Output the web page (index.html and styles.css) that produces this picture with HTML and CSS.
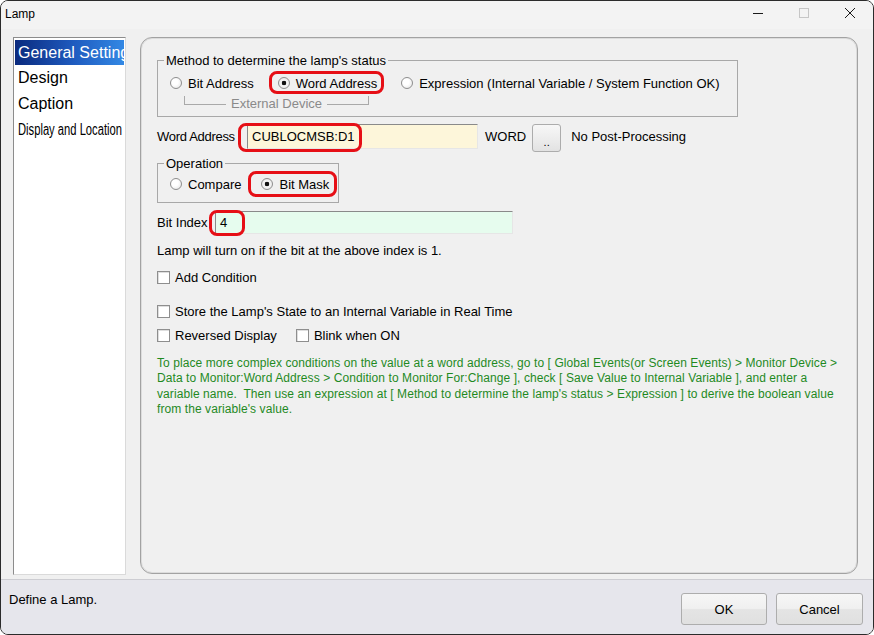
FILE: index.html
```html
<!DOCTYPE html>
<html lang="en">
<head>
    <meta charset="UTF-8">
    <title>Lamp</title>
    <link rel="stylesheet" href="styles.css">
</head>
<body>
    <div class="window">
        <div class="titlebar">
            <span class="title">Lamp</span>
            <div class="controls">
                <span class="ctrl"><svg width="10" height="10" viewBox="0 0 10 10"><path d="M0 5.5h10" stroke="#1a1a1a" stroke-width="1"/></svg></span>
                <span class="ctrl"><svg width="10" height="10" viewBox="0 0 10 10"><rect x="0.5" y="0.5" width="9" height="9" fill="none" stroke="#c6c6c6"/></svg></span>
                <span class="ctrl"><svg width="10" height="10" viewBox="0 0 10 10"><path d="M0 0L10 10M10 0L0 10" stroke="#1a1a1a" stroke-width="1"/></svg></span>
            </div>
        </div>

        <div class="main">
            <ul class="nav">
                <li class="active">General Setting</li>
                <li>Design</li>
                <li>Caption</li>
                <li class="small"><span>Display and Location</span></li>
            </ul>

            <div class="panel">
                <fieldset class="group method">
                    <legend>Method to determine the lamp's status</legend>
                    <div class="opts">
                        <label class="opt"><span class="radio"></span>Bit Address</label>
                        <label class="opt mark mark-word"><span class="radio on"></span>Word Address</label>
                        <label class="opt"><span class="radio"></span>Expression (Internal Variable / System Function OK)</label>
                    </div>
                    <div class="bracket"><span>External Device</span></div>
                </fieldset>

                <div class="row">
                    <span class="lbl lbl-word">Word Address</span>
                    <span class="field field-word">CUBLOCMSB:D1<i class="ring ring-word"></i></span>
                    <span class="lbl unit">WORD</span>
                    <button class="dots">..</button>
                    <span class="lbl post">No Post-Processing</span>
                </div>

                <fieldset class="group op">
                    <legend>Operation</legend>
                    <div class="opts">
                        <label class="opt"><span class="radio"></span>Compare</label>
                        <label class="opt mark mark-mask"><span class="radio on"></span>Bit Mask</label>
                    </div>
                </fieldset>

                <div class="row row-index">
                    <span class="lbl lbl-index">Bit Index</span>
                    <span class="field field-index">4<i class="ring ring-index"></i></span>
                </div>

                <p class="hint">Lamp will turn on if the bit at the above index is 1.</p>

                <label class="check c-add"><span class="box"></span>Add Condition</label>
                <label class="check c-store"><span class="box"></span>Store the Lamp's State to an Internal Variable in Real Time</label>
                <div class="c-pair">
                    <label class="check"><span class="box"></span>Reversed Display</label>
                    <label class="check"><span class="box"></span>Blink when ON</label>
                </div>

                <p class="note">To place more complex conditions on the value at a word address, go to [ Global Events(or Screen Events) &gt; Monitor Device &gt;<br>Data to Monitor:Word Address &gt; Condition to Monitor For:Change ], check [ Save Value to Internal Variable ], and enter a<br>variable name.&nbsp; Then use an expression at [ Method to determine the lamp's status &gt; Expression ] to derive the boolean value<br>from the variable's value.</p>
            </div>
        </div>

        <div class="footer">
            <span class="msg">Define a Lamp.</span>
            <div class="actions">
                <button class="btn btn-ok">OK</button>
                <button class="btn">Cancel</button>
            </div>
        </div>
    </div>
</body>
</html>
```

FILE: styles.css
```css
* {
    box-sizing: border-box;
}

body {
    margin: 0;
    font-family: "Liberation Sans", Arial, sans-serif;
    font-size: 13px;
    color: #000;
    background: #fff;
}

.window {
    width: 874px;
    height: 635px;
    border: 1px solid #2b2b2b;
    border-radius: 8px;
    background: #f0f0f0;
    display: flex;
    flex-direction: column;
    overflow: hidden;
}

/* title bar */
.titlebar {
    height: 28px;
    flex-shrink: 0;
    display: flex;
    align-items: flex-start;
    padding-left: 4px;
    background: #f3f3f3;
}

.title {
    font-size: 12px;
    line-height: 14px;
    margin-top: 6px;
}

.controls {
    margin-left: auto;
    display: flex;
}

.ctrl {
    width: 46px;
    height: 24px;
    display: flex;
    justify-content: center;
    padding-top: 7px;
}

/* body */
.main {
    height: 550px;
    flex-shrink: 0;
    display: flex;
    gap: 14px;
    padding: 8px 15px 0 12px;
}

.nav {
    width: 113px;
    height: 538px;
    margin: 0;
    padding: 2px 1px;
    list-style: none;
    background: #fff;
    border: 1px solid;
    border-color: #8c8c8c #dadada #dadada #8c8c8c;
}

.nav li {
    height: 26px;
    line-height: 26px;
    padding-left: 3px;
    font-size: 16px;
    white-space: nowrap;
    overflow: hidden;
}

.nav .active {
    height: 25px;
    line-height: 25px;
    color: #fff;
    background: linear-gradient(90deg, #0a2a7e, #1f5cc0 55%, #3388e4);
}

.nav .small span {
    display: inline-block;
    font-size: 16px;
    transform: scaleX(0.7);
    transform-origin: left center;
}

.panel {
    width: 718px;
    height: 537px;
    border: 1px solid #a2a2a2;
    border-radius: 12px;
    box-shadow: inset 0 0 0 1px #dcdcdc;
    padding: 15px 0 0 16px;
}

/* group boxes */
.group {
    margin: 0;
    border: 1px solid #a8a8a8;
    padding: 3px 6px 4px;
}

.group legend {
    padding: 0 2px;
    line-height: 15px;
}

.method {
    width: 581px;
}

.op {
    width: 182px;
    margin-top: 4px;
    padding: 1px 6px 6px;
}

.opts {
    display: flex;
    align-items: center;
    gap: 24px;
    height: 24px;
    padding-left: 6px;
}

.op .opts {
    gap: 20px;
}

.opt {
    display: inline-flex;
    align-items: center;
    flex-shrink: 0;
    gap: 6px;
    height: 100%;
    position: relative;
    white-space: nowrap;
}

.radio {
    width: 12px;
    height: 12px;
    flex-shrink: 0;
    border-radius: 50%;
    border: 1px solid #8e8e8e;
    background: radial-gradient(circle at 40% 40%, #fff 35%, #e0e0e0);
}

.radio.on {
    background: radial-gradient(circle, #111 0 2px, #f6f6f6 2.6px, #e2e2e2);
}

/* red annotation rings */
.mark::after,
.ring {
    content: "";
    position: absolute;
    border: 3px solid #e60f16;
    border-radius: 8px;
    pointer-events: none;
}

.mark-word::after {
    left: -9px;
    right: -7px;
    top: 0;
    bottom: 1px;
}

.mark-mask::after {
    left: -13px;
    right: -8px;
    top: -1px;
    bottom: -1px;
}

.ring-word {
    left: -10px;
    top: -2px;
    width: 124px;
    height: 29px;
}

.ring-index {
    left: -7px;
    top: -2px;
    width: 36px;
    height: 26px;
}

.bracket {
    display: flex;
    width: 185px;
    height: 16px;
    margin: 1px 0 0 20px;
    color: #8a8a8a;
}

.bracket::before,
.bracket::after {
    content: "";
    flex: 1;
    height: 8px;
    border-bottom: 1px solid #a9a9a9;
}

.bracket::before {
    border-left: 1px solid #a9a9a9;
}

.bracket::after {
    border-right: 1px solid #a9a9a9;
}

.bracket span {
    padding: 0 5px;
    line-height: 16px;
}

/* rows */
.row {
    display: flex;
    align-items: flex-start;
    margin-top: 7px;
}

.lbl {
    line-height: 25px;
    white-space: nowrap;
}

.lbl-word {
    width: 90px;
    letter-spacing: -0.3px;
}

.lbl-index {
    width: 58px;
    line-height: 23px;
}

.field {
    position: relative;
    height: 25px;
    line-height: 23px;
    padding-left: 4px;
    border: 1px solid;
    border-color: #8a8a8a #e6e6e6 #e6e6e6 #8a8a8a;
}

.field-word {
    width: 231px;
    background: #fdf6da;
}

.row-index {
    margin-top: 8px;
}

.field-index {
    width: 298px;
    height: 23px;
    line-height: 21px;
    background: #e6fcee;
}

.unit {
    margin-left: 7px;
}

.dots {
    width: 29px;
    height: 28px;
    margin-left: 6px;
    padding: 8px 0 0;
    border: 1px solid #acacac;
    border-radius: 3px;
    background: linear-gradient(#f7f7f7, #ededed 50%, #e2e2e2);
    font: inherit;
    font-size: 11px;
}

.post {
    margin-left: 10px;
}

.hint {
    margin: 9px 0 0;
    line-height: 15px;
}

/* checkboxes */
.check {
    display: flex;
    align-items: center;
    gap: 5px;
    line-height: 15px;
}

.box {
    width: 13px;
    height: 13px;
    border: 1px solid #8e8e8e;
    background: #fff;
    box-shadow: inset 1px 1px 0 #dedede;
}

.c-add {
    margin-top: 12px;
}

.c-store {
    margin-top: 19px;
}

.c-pair {
    display: flex;
    gap: 19px;
    margin-top: 9px;
}

.note {
    margin: 13px 0 0;
    color: #1f8a1f;
    font-size: 12px;
    line-height: 15.3px;
    letter-spacing: 0.08px;
    white-space: nowrap;
}

/* footer */
.footer {
    flex: 1;
    display: flex;
    align-items: flex-start;
    padding: 13px 10px 0 8px;
    border-top: 1px solid #cdcdd2;
    background: #e6e6ec;
}

.msg {
    line-height: 13px;
}

.actions {
    margin-left: auto;
    display: flex;
    gap: 9px;
}

.btn {
    width: 87px;
    height: 32px;
    border: 1px solid #adadad;
    border-radius: 3px;
    background: linear-gradient(#f6f6f6, #f0f0f0 48%, #e4e4e4 52%, #e0e0e0);
    font: inherit;
    font-size: 13px;
    color: #000;
}

.btn-ok {
    width: 86px;
}
```
